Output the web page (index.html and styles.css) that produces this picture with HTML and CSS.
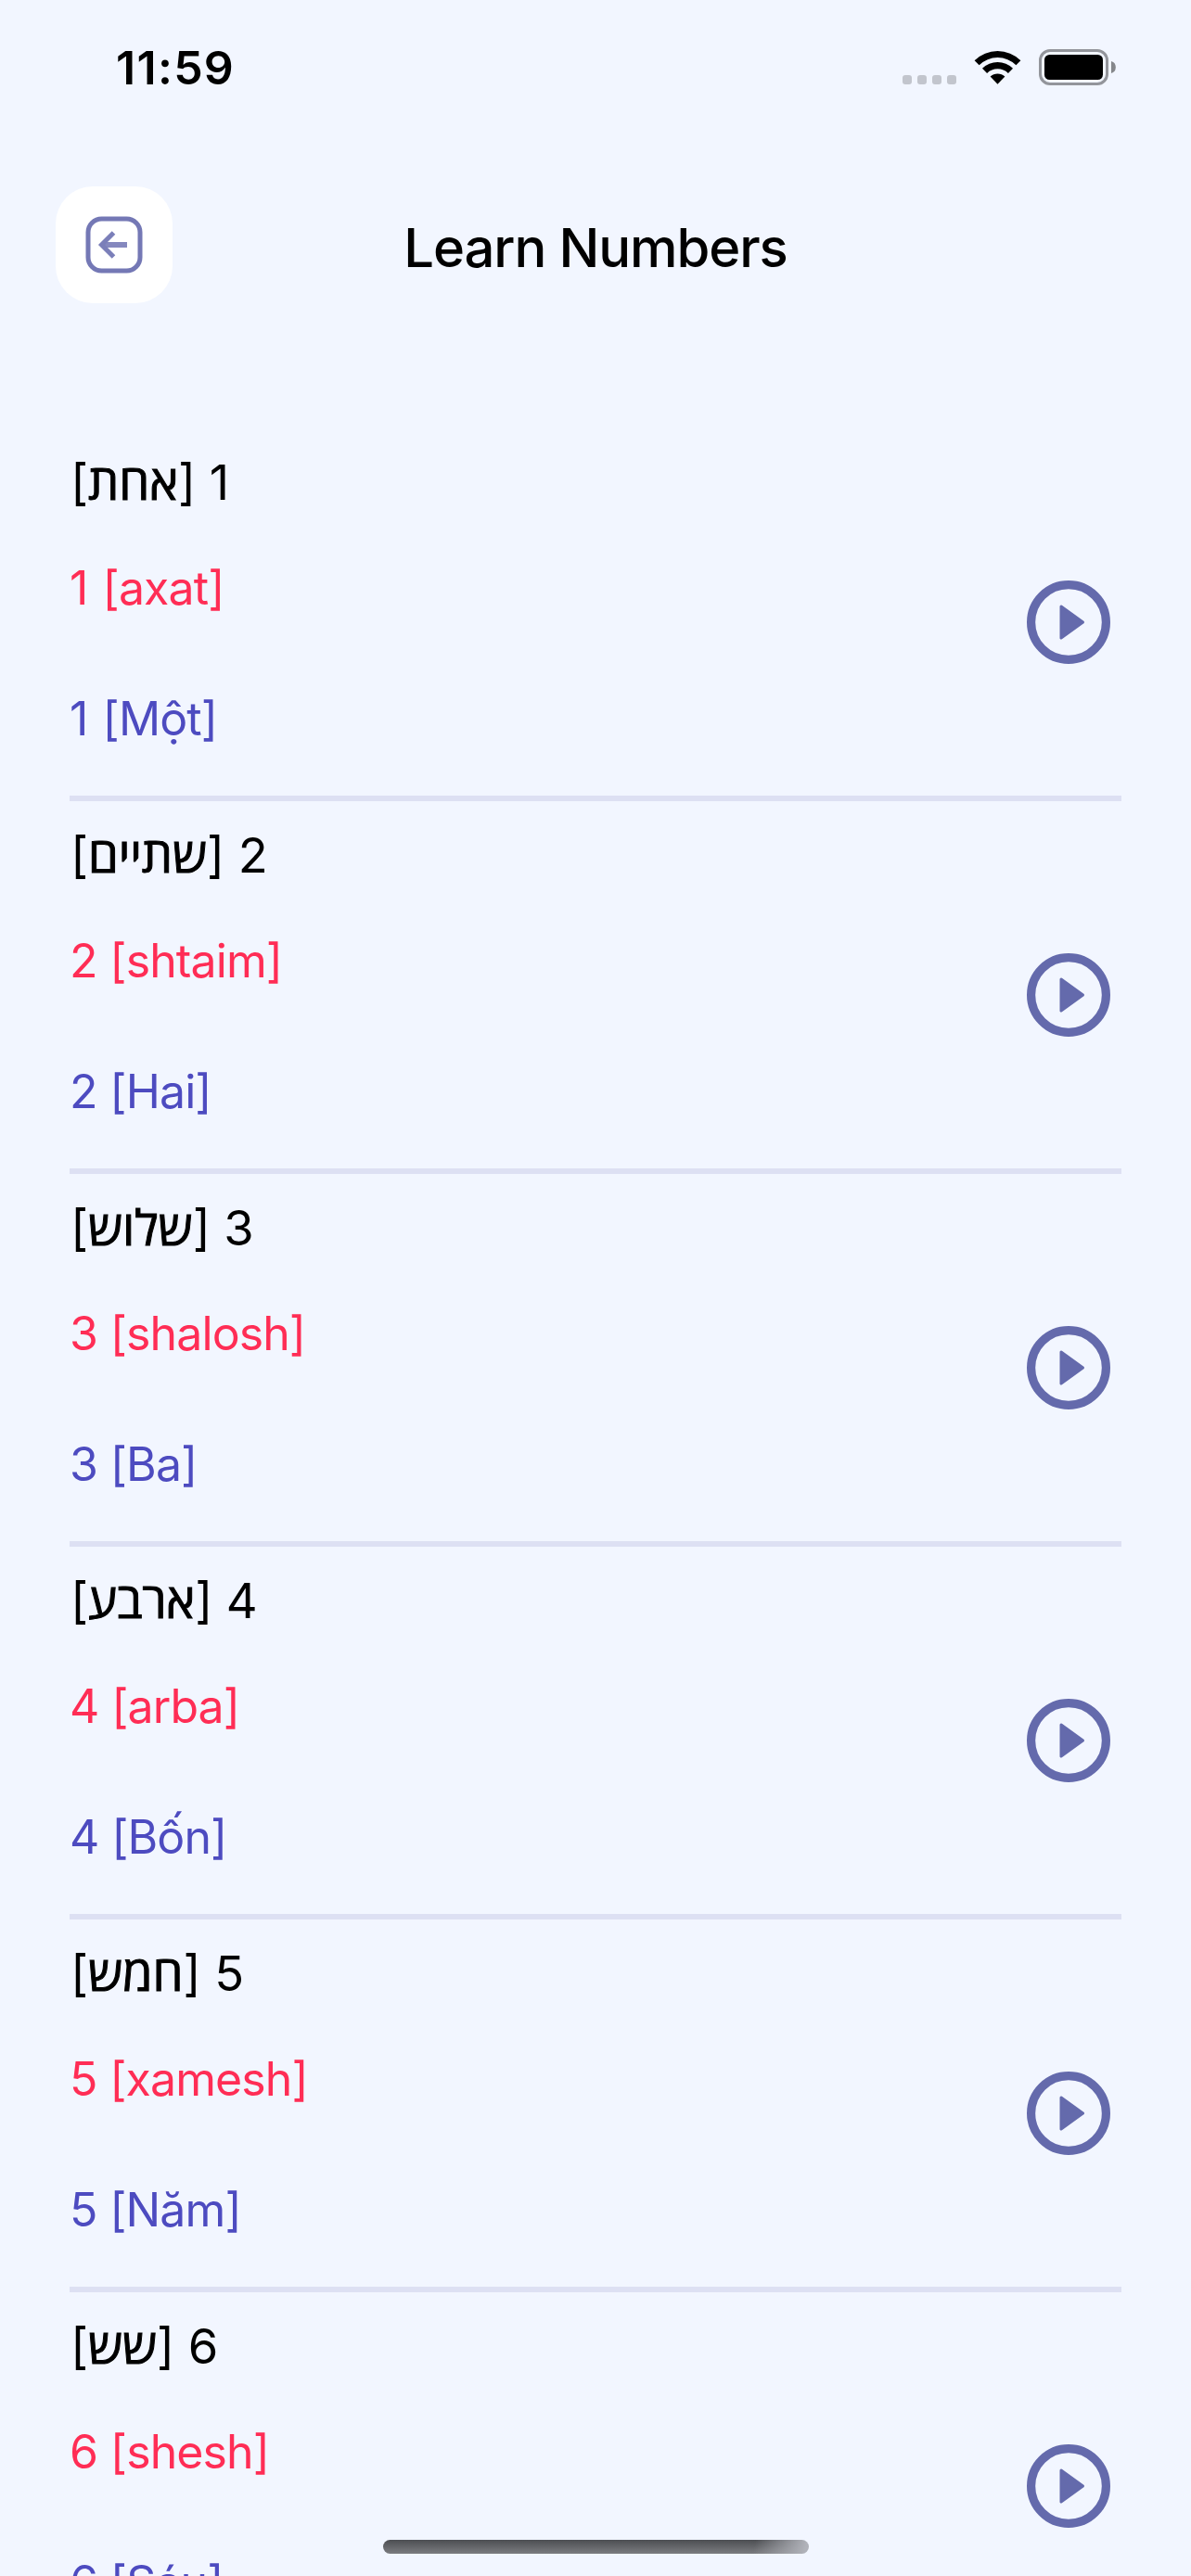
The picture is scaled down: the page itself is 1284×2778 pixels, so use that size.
FILE: index.html
```html
<!DOCTYPE html>
<html lang="en">
<head>
<meta charset="utf-8">
<title>Learn Numbers</title>
<link rel="stylesheet" href="styles.css">
</head>
<body>
<svg class="defs" aria-hidden="true">
  <symbol id="play" viewBox="0 0 90 90">
    <circle cx="45" cy="45" r="40.4" fill="none" stroke="currentColor" stroke-width="9.2"/>
    <path d="M37 28 L60.5 45 L37 62 Z" fill="currentColor" stroke="currentColor" stroke-width="3" stroke-linejoin="round"/>
  </symbol>
</svg>
<div class="screen">
  <header class="status">
    <span class="time">11:59</span>
    <div class="indicators">
      <div class="dots"><i></i><i></i><i></i><i></i></div>
      <svg class="wifi" viewBox="0 0 51 37">
        <path d="M0.6 11.2 A35.5 35.5 0 0 1 50.4 11.2 L45.4 16.2 A28.3 28.3 0 0 0 5.6 16.2 Z"/>
        <path d="M9 19.8 A23.6 23.6 0 0 1 42 19.8 L36.9 24.9 A16.3 16.3 0 0 0 14.1 24.9 Z"/>
        <path d="M17.6 28.6 A11.4 11.4 0 0 1 33.4 28.6 L25.5 36.8 Z"/>
      </svg>
      <svg class="battery" viewBox="0 0 83 39">
        <rect x="1.5" y="1.5" width="72" height="36" rx="10.5" fill="none" stroke="#93959b" stroke-width="3"/>
        <rect x="6" y="6" width="63" height="27" rx="5.5"/>
        <path d="M78 13 A6.8 6.8 0 0 1 78 26 Z" fill="#85878b"/>
      </svg>
    </div>
  </header>
  <nav class="bar">
    <button class="back" aria-label="Back">
      <svg viewBox="0 0 62 62" fill="none" stroke="#8588be" stroke-width="6">
        <rect x="3" y="3" width="56" height="56" rx="14.5" stroke="#7478b5" stroke-width="5"/>
        <path d="M19 31 H45"/>
        <path d="M30.5 18 L17.5 31 L30.5 44" stroke="#7b7fb9" stroke-width="5"/>
      </svg>
    </button>
    <h1 class="title">Learn Numbers</h1>
  </nav>
  <main class="list">
    <section class="row first">
      <div class="words">
        <p class="hebrew" dir="rtl">1 [<b>אחת</b>]</p>
        <p class="latin">1 [axat]</p>
        <p class="meaning">1 [Một]</p>
      </div>
      <svg class="play"><use href="#play"/></svg>
    </section>
    <section class="row">
      <div class="words">
        <p class="hebrew" dir="rtl">2 [<b>שתיים</b>]</p>
        <p class="latin">2 [shtaim]</p>
        <p class="meaning">2 [Hai]</p>
      </div>
      <svg class="play"><use href="#play"/></svg>
    </section>
    <section class="row">
      <div class="words">
        <p class="hebrew" dir="rtl">3 [<b>שלוש</b>]</p>
        <p class="latin">3 [shalosh]</p>
        <p class="meaning">3 [Ba]</p>
      </div>
      <svg class="play"><use href="#play"/></svg>
    </section>
    <section class="row">
      <div class="words">
        <p class="hebrew" dir="rtl">4 [<b>ארבע</b>]</p>
        <p class="latin">4 [arba]</p>
        <p class="meaning">4 [Bốn]</p>
      </div>
      <svg class="play"><use href="#play"/></svg>
    </section>
    <section class="row">
      <div class="words">
        <p class="hebrew" dir="rtl">5 [<b>חמש</b>]</p>
        <p class="latin">5 [xamesh]</p>
        <p class="meaning">5 [Năm]</p>
      </div>
      <svg class="play"><use href="#play"/></svg>
    </section>
    <section class="row">
      <div class="words">
        <p class="hebrew" dir="rtl">6 [<b>שש</b>]</p>
        <p class="latin">6 [shesh]</p>
        <p class="meaning">6 [Sáu]</p>
      </div>
      <svg class="play"><use href="#play"/></svg>
    </section>
  </main>
  <div class="home-indicator"></div>
</div>
</body>
</html>
```
FILE: styles.css
```css
* { box-sizing: border-box; }
body { margin: 0; background: #f2f6ff; }
.defs { display: none; }
.screen {
  position: relative;
  width: 1284px;
  height: 2778px;
  overflow: hidden;
  background: #f2f6ff;
  color: #000;
  font-family: Inter, "Open Sans", "Liberation Sans", sans-serif;
}
.status {
  display: flex;
  justify-content: space-between;
  height: 201px;
  padding: 53px 81px 0 125px;
}
.time {
  height: 40px;
  line-height: 41px;
  font-size: 50px;
  font-weight: 600;
  letter-spacing: 1.3px;
}
.indicators { display: flex; height: 39px; }
.dots { display: flex; gap: 6px; padding-top: 28px; margin-right: 19px; }
.dots i { width: 10px; height: 10px; border-radius: 3px; background: #c2c5cd; }
.wifi { width: 51px; height: 37px; margin: 1px 19px 0 0; }
.battery { width: 83px; height: 39px; }
.bar {
  display: grid;
  grid-template-columns: 126px 1fr 126px;
  height: 261px;
  padding: 0 60px;
}
.back {
  display: flex;
  align-items: center;
  justify-content: center;
  width: 126px;
  height: 126px;
  padding: 0;
  border: 0;
  border-radius: 40px;
  background: #fff;
}
.back svg { width: 62px; height: 62px; }
.title {
  margin: 26px 0 0;
  height: 80px;
  line-height: 80px;
  font-size: 58px;
  font-weight: 500;
  letter-spacing: -1.1px;
  text-align: center;
}
.list { padding: 0 75px; }
.row {
  display: flex;
  justify-content: space-between;
  height: 402px;
  padding: 18px 12px 0 0;
  border-bottom: 6px solid #dde0f3;
}
.words { display: flex; flex-direction: column; align-items: flex-start; }
.words p {
  margin: 0;
  height: 80px;
  line-height: 80px;
  font-size: 50px;
  letter-spacing: -0.9px;
  word-spacing: 0.6px;
  white-space: nowrap;
}
.first .latin, .first .meaning { word-spacing: 3px; }
.words .hebrew {
  margin-left: 1px;
  font-size: 52.5px;
  letter-spacing: -0.1px;
  word-spacing: 0;
}
.hebrew b {
  font-family: "Open Sans", sans-serif;
  font-weight: 400;
  line-height: 0;
  -webkit-text-stroke: 1px currentColor;
}
.words .latin { margin-top: 34px; color: #ff2d55; }
.words .meaning { margin-top: 61px; color: #4d4bc0; }
.play { width: 90px; height: 90px; margin-top: 146px; color: #646aac; }
.home-indicator {
  position: absolute;
  left: 413px;
  top: 2739px;
  width: 459px;
  height: 15px;
  border-radius: 8px;
  background:
    linear-gradient(100deg, transparent 87%, #b0b2b9 99%),
    linear-gradient(#4c4e52, #7b7c80);
}
```
